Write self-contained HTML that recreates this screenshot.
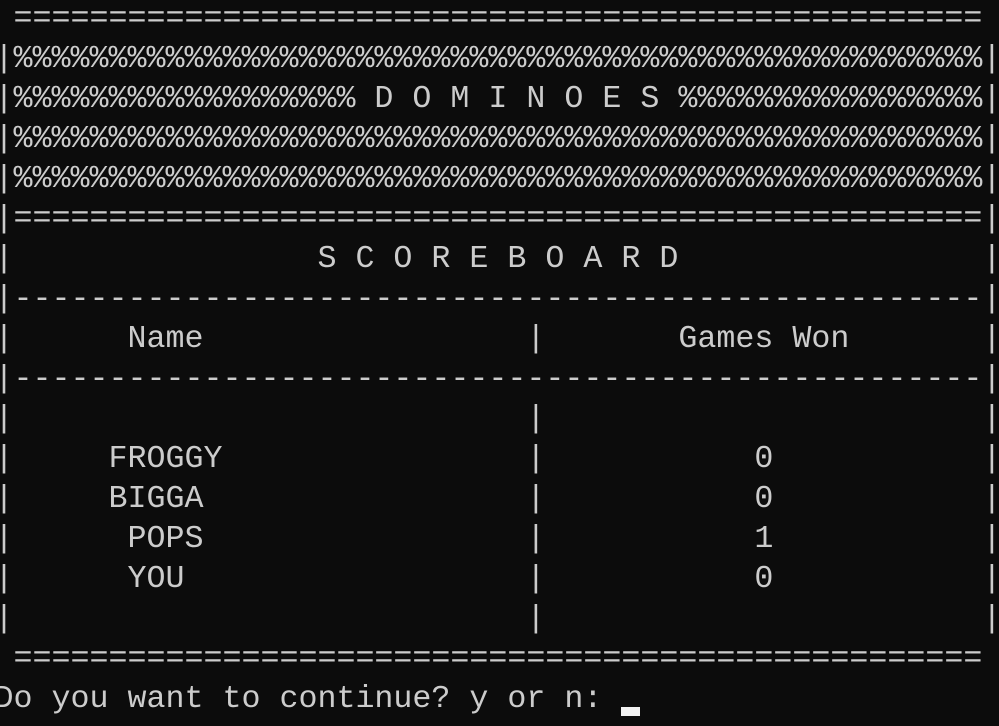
<!DOCTYPE html>
<html><head><meta charset="utf-8"><style>
html,body{margin:0;padding:0;background:#0c0c0c;width:999px;height:726px;overflow:hidden}
pre{position:absolute;left:-5.5px;top:-1px;margin:0;font-family:"Liberation Mono",monospace;font-size:31.67px;line-height:40px;color:#cccccc;white-space:pre}
.cur{display:inline-block;width:19px;height:9px;background:#f2f2f2;vertical-align:-9px;margin-left:0}
</style></head><body>
<pre> ===================================================
|%%%%%%%%%%%%%%%%%%%%%%%%%%%%%%%%%%%%%%%%%%%%%%%%%%%|
|%%%%%%%%%%%%%%%%%% D O M I N O E S %%%%%%%%%%%%%%%%|
|%%%%%%%%%%%%%%%%%%%%%%%%%%%%%%%%%%%%%%%%%%%%%%%%%%%|
|%%%%%%%%%%%%%%%%%%%%%%%%%%%%%%%%%%%%%%%%%%%%%%%%%%%|
|===================================================|
|                S C O R E B O A R D                |
|---------------------------------------------------|
|      Name                 |       Games Won       |
|---------------------------------------------------|
|                           |                       |
|     FROGGY                |           0           |
|     BIGGA                 |           0           |
|      POPS                 |           1           |
|      YOU                  |           0           |
|                           |                       |
 ===================================================
Do you want to continue? y or n: <span class="cur"></span></pre>
</body></html>
